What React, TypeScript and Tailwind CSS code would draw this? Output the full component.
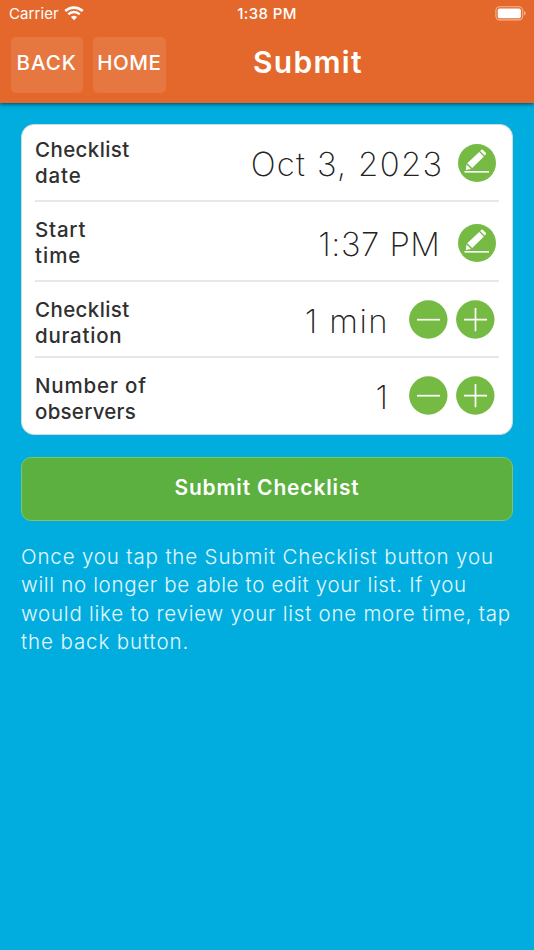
import type { ReactNode } from "react";

function WifiIcon() {
  return (
    <svg className="h-[15px] w-[20px]" viewBox="0 0 20 15" fill="none">
      <path d="M1.3 5.1A12.6 12.6 0 0 1 18.7 5.1" stroke="white" strokeWidth="2.7" />
      <path d="M4.3 8.3A8.2 8.2 0 0 1 15.7 8.3" stroke="white" strokeWidth="2.4" />
      <path d="M10 14.2 6.9 11.1A4.5 4.5 0 0 1 13.1 11.1Z" fill="white" />
    </svg>
  );
}

function BatteryIcon() {
  return (
    <svg className="h-[15px] w-[32px]" viewBox="0 0 32 15" fill="none">
      <rect x="0.9" y="0.7" width="26.8" height="13.2" rx="3.8" stroke="white" strokeOpacity="0.5" strokeWidth="1.1" />
      <rect x="2.7" y="2.4" width="23.2" height="9.8" rx="1.8" fill="white" />
      <path d="M29 5.1C31.2 5.8 31.2 8.8 29 9.5Z" fill="white" fillOpacity="0.5" />
    </svg>
  );
}

function EditIcon() {
  return (
    <svg className="size-[38px]" viewBox="0 0 38 38">
      <circle cx="19" cy="19" r="19" fill="#75bb43" />
      <path d="M6.5 27.8H31" stroke="white" strokeWidth="1.6" />
      <g fill="white">
        <path d="M7.8 25.9 8.5 20.4 13 25Z" />
        <path d="M9.2 19.2 21.2 7.9 25.9 12.6 14.2 24.1Z" />
        <path d="M22.1 7 23.5 5.8Q24.3 5.2 25 5.9L27.8 8.7Q28.4 9.4 27.8 10.2L26.8 11.6Z" />
      </g>
    </svg>
  );
}

function StepIcon({ plus = false }: { plus?: boolean }) {
  return (
    <svg className="size-[39px]" viewBox="0 0 39 39">
      <circle cx="19.3" cy="19.5" r="19.2" fill="#75bb43" />
      <path d={plus ? "M8 19.7H31M19.5 8V31.3" : "M8 19.7H31"} stroke="white" strokeWidth="1.7" />
    </svg>
  );
}

function Row({ label, height, children }: { label: ReactNode; height: string; children: ReactNode }) {
  return (
    <div className={`flex items-start justify-between ${height}`}>
      <div className="pt-[12px] text-[20.5px] font-medium leading-[25.5px] text-[#303030]">{label}</div>
      <div className="flex items-center pt-[19px] text-[#222]">{children}</div>
    </div>
  );
}

export default function App() {
  return (
    <div className="h-[950px] w-[534px] overflow-hidden bg-[#00adde] font-['Inter','Liberation_Sans',sans-serif]">
      <header className="relative h-[103px] bg-[#e4682b] text-white shadow-[0_1px_4px_rgba(0,40,60,0.8)]">
        <div className="grid h-[28px] grid-cols-3 items-center px-[9px] text-[15px]">
          <div className="flex items-center gap-[5px]">
            <span className="tracking-[0.1px]">Carrier</span>
            <div className="-mt-[2px]"><WifiIcon /></div>
          </div>
          <div className="text-center font-medium tracking-[0.4px]">1:38 PM</div>
          <div className="-mr-[2px] -mt-px flex justify-end"><BatteryIcon /></div>
        </div>
        <div className="flex pl-[10.5px] pt-[8.5px]">
          <button className="h-[56.5px] w-[72.5px] rounded-[5px] bg-white/10 pb-[3px] text-[20.5px] font-medium tracking-[1px]">BACK</button>
          <button className="ml-[10px] h-[56.5px] w-[72.5px] rounded-[5px] bg-white/10 pb-[3px] text-[20.5px] font-medium tracking-[0.5px]">HOME</button>
          <h1 className="ml-[87.5px] pt-[4.5px] text-[30px] font-semibold leading-[42px] tracking-[1.3px]">Submit</h1>
        </div>
      </header>
      <main className="px-[21px] pt-[21px]">
        <section className="h-[311px] rounded-[13px] border border-[#cfdcd8] bg-white px-[13px]">
          <Row
            label={<><div className="tracking-[0.4px]">Checklist</div><div className="tracking-[0.9px]">date</div></>}
            height="h-[77px] border-b-2 border-[#e7e7e7]"
          >
            <span className="mr-[14px] pt-[1px] text-[33px] font-extralight leading-[38px] tracking-[1.3px]">Oct 3, 2023</span>
            <div className="-mt-px mr-[3.5px]"><EditIcon /></div>
          </Row>
          <Row
            label={<><div className="tracking-[0.8px]">Start</div><div className="tracking-[1px]">time</div></>}
            height="pt-[3px] h-[80px] border-b-2 border-[#e7e7e7]"
          >
            <span className="mr-[17px] pt-[1px] text-[33px] font-extralight leading-[38px] tracking-[0.5px]">1:37 PM</span>
            <div className="-mt-px mr-[3.5px]"><EditIcon /></div>
          </Row>
          <Row
            label={<><div className="tracking-[0.4px]">Checklist</div><div className="tracking-[0.75px]">duration</div></>}
            height="pt-[3px] h-[76px] border-b-2 border-[#e7e7e7]"
          >
            <span className="-mt-[2px] mr-[20px] text-[33px] font-extralight leading-[38px] tracking-[1.4px]">1 min</span>
            <div className="-mt-[6px] mr-[4px] flex gap-[8px]"><StepIcon /><StepIcon plus /></div>
          </Row>
          <Row
            label={<><div className="tracking-[0.85px]">Number of</div><div className="tracking-[0.25px]">observers</div></>}
            height="pt-[3px] h-[76px]"
          >
            <span className="-mt-[2px] mr-[21px] text-[33px] font-extralight leading-[38px]">1</span>
            <div className="-mt-[6px] mr-[4px] flex gap-[8px]"><StepIcon /><StepIcon plus /></div>
          </Row>
        </section>
        <button className="mt-[22px] block h-[64px] w-full rounded-[10px] border border-[#82c466] bg-[#5bb03f] pb-[3px] text-[21px] font-semibold tracking-[0.85px] text-white">
          Submit Checklist
        </button>
        <div className="mt-[22px] whitespace-nowrap text-[20.5px] font-light leading-[28.4px] text-white/90">
          <div className="tracking-[0.85px]">Once you tap the Submit Checklist button you</div>
          <div className="tracking-[0.67px]">will no longer be able to edit your list. If you</div>
          <div className="tracking-[0.76px]">would like to review your list one more time, tap</div>
          <div className="tracking-[0.9px]">the back button.</div>
        </div>
      </main>
    </div>
  );
}
